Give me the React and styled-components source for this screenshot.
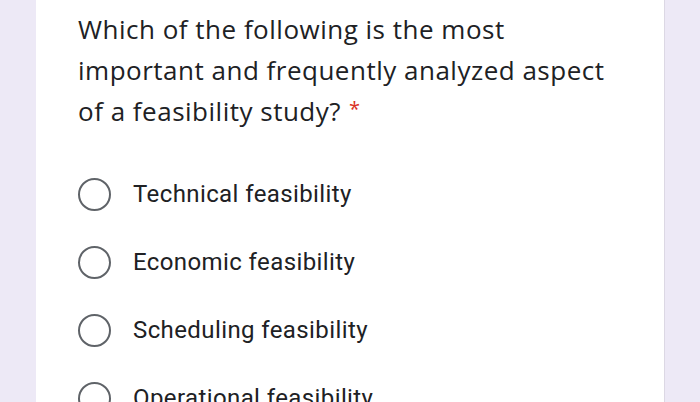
import React from "react";
import styled, { createGlobalStyle } from "styled-components";

const GlobalStyle = createGlobalStyle`
  html, body {
    margin: 0;
    padding: 0;
    background: #ede9f6;
    overflow: hidden;
  }
`;

const Page = styled.div`
  width: 700px;
  height: 402px;
  display: flex;
  background: #ede9f6;
`;

const Card = styled.section`
  margin-left: 36px;
  width: 629px;
  background: #ffffff;
  border-right: 1px solid #dcd8e4;
  padding: 9px 0 0 42px;
  box-sizing: border-box;
  display: flex;
  flex-direction: column;
`;

const Question = styled.h2`
  margin: 0;
  font-family: "Open Sans", Roboto, sans-serif;
  font-weight: 400;
  font-size: 26px;
  line-height: 41px;
  letter-spacing: 0.5px;
  color: #202124;
  white-space: nowrap;
`;

const Required = styled.span`
  color: #d93025;
  font-size: 20px;
  margin-left: 8px;
  vertical-align: top;
  line-height: 36px;
`;

const Options = styled.ul`
  list-style: none;
  margin: 46px 0 0;
  padding: 0;
  display: flex;
  flex-direction: column;
  gap: 36px;
`;

const Option = styled.li`
  display: flex;
  align-items: center;
  gap: 22px;
  height: 32px;
`;

const Radio = styled.span`
  width: 33px;
  height: 33px;
  box-sizing: border-box;
  border: 2.5px solid #5f6368;
  border-radius: 50%;
  flex-shrink: 0;
`;

const Label = styled.span`
  font-family: Roboto, "Liberation Sans", sans-serif;
  font-size: 24px;
  color: #202124;
  letter-spacing: 0.4px;
`;

const options = [
  "Technical feasibility",
  "Economic feasibility",
  "Scheduling feasibility",
  "Operational feasibility",
];

export default function App() {
  return (
    <>
      <GlobalStyle />
      <Page>
        <Card>
          <Question>
            Which of the following is the most
            <br />
            important and frequently analyzed aspect
            <br />
            of a feasibility study?
            <Required>*</Required>
          </Question>
          <Options>
            {options.map((o) => (
              <Option key={o}>
                <Radio />
                <Label>{o}</Label>
              </Option>
            ))}
          </Options>
        </Card>
      </Page>
    </>
  );
}
